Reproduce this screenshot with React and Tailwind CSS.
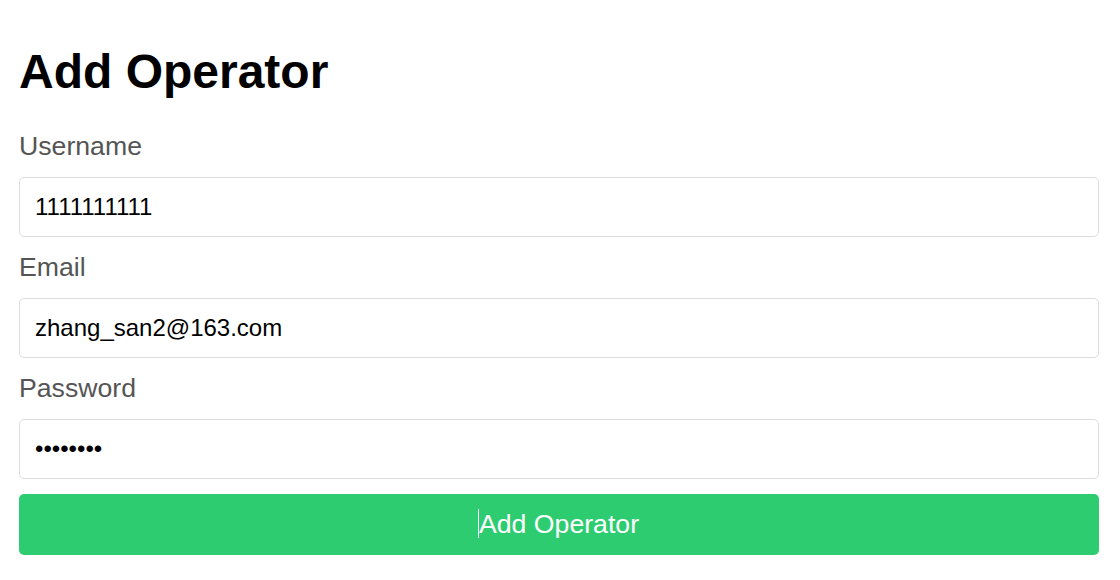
import { useState } from 'react';

const FONT = { fontFamily: '"Liberation Sans", Arial, sans-serif' };

export default function App() {
  const [form, setForm] = useState({
    username: '1111111111',
    email: 'zhang_san2@163.com',
    password: '12345678',
  });

  const update = (key) => (e) => setForm({ ...form, [key]: e.target.value });

  const fields = [
    { key: 'username', label: 'Username', type: 'text' },
    { key: 'email', label: 'Email', type: 'email' },
    { key: 'password', label: 'Password', type: 'password' },
  ];

  return (
    <div className="min-h-screen bg-white pl-[19px] pr-[21px] pt-[44px]" style={FONT}>
      <h1 className="text-[48px] leading-[55px] font-bold text-black mb-[32px]">Add Operator</h1>

      <form onSubmit={(e) => e.preventDefault()}>
        {fields.map((f) => (
          <div key={f.key}>
            <label className="block text-[26.67px] leading-[31px] text-[#555555] mb-[15px]">
              {f.label}
            </label>
            <input
              type={f.type}
              value={form[f.key]}
              onChange={update(f.key)}
              className="block w-full h-[60px] px-[15px] mb-[15px] border border-[#dddddd] rounded-[5px] text-[24px] text-black bg-white outline-none"
              style={FONT}
            />
          </div>
        ))}

        <button
          type="submit"
          className="w-full h-[61px] rounded-[5px] bg-[#2ecc71] text-white text-[26.67px] leading-[31px] flex items-center justify-center"
          style={FONT}
        >
          <span className="relative">
            {/* text cursor seen in the screenshot */}
            <span className="absolute -left-px top-0 w-px h-[29px] bg-white" />
            Add Operator
          </span>
        </button>
      </form>
    </div>
  );
}
